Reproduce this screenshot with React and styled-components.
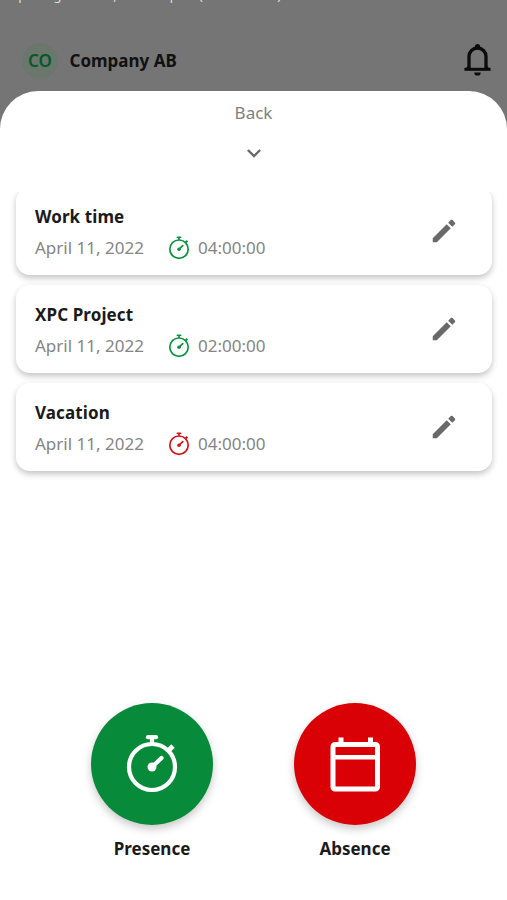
import React from 'react';
import styled, { createGlobalStyle } from 'styled-components';

const GlobalStyle = createGlobalStyle`
  * {
    box-sizing: border-box;
  }
  body {
    margin: 0;
    background: #757575;
    font-family: "Noto Sans", "Open Sans", sans-serif;
    color: #1a1a1a;
  }
`

const Screen = styled.div`
  display: flex;
  flex-direction: column;
  height: 900px;
  overflow: hidden;
  background: #757575;
`

const Caption = styled.div`
  display: flex;
  align-items: flex-end;
  height: 3px;
  padding-left: 8px;
  overflow: hidden;
  color: #dedede;
  font-size: 13px;
  letter-spacing: 0.1px;
  line-height: 16px;
  white-space: nowrap;
`

const Header = styled.header`
  display: flex;
  align-items: center;
  height: 88px;
  padding: 27px 16px 0 22px;
`

const Avatar = styled.div`
  width: 36px;
  height: 36px;
  border-radius: 50%;
  background: #6b766d;
  color: #05592a;
  font-size: 17px;
  font-weight: 650;
  line-height: 36px;
  text-align: center;
`

const Company = styled.div`
  flex: 1;
  margin-left: 11.5px;
  color: #111;
  font-size: 17px;
  font-weight: 700;
`

const Sheet = styled.main`
  display: flex;
  flex: 1;
  flex-direction: column;
  border-radius: 38px 38px 0 0;
  background: #fff;
`

const BackButton = styled.button`
  display: flex;
  flex-direction: column;
  align-items: center;
  gap: 24px;
  height: 101px;
  padding: 10px 0 0;
  border: 0;
  background: none;
  color: #808080;
  font: inherit;
  font-size: 17px;
  line-height: 24px;
`

const CardList = styled.div`
  display: flex;
  flex-direction: column;
  gap: 10px;
  height: 300px;
  padding: 0 15px 0 16px;
  overflow: hidden;
`

const Card = styled.article`
  display: flex;
  align-items: center;
  justify-content: space-between;
  flex: none;
  height: 88px;
  padding: 2px 33px 0 19px;
  border-radius: 14px;
  background: #fff;
  box-shadow: 0 3px 6px rgba(0, 0, 0, 0.24);

  &:first-child {
    margin-top: -5px;
  }
`

const CardTitle = styled.div`
  padding-top: 1px;
  font-size: 17px;
  font-weight: 700;
  letter-spacing: 0.1px;
  line-height: 24px;
`

const CardMeta = styled.div`
  display: flex;
  align-items: center;
  height: 24px;
  margin-top: 7px;
  color: #858585;
  font-size: 17px;
  line-height: 24px;
`

const CardDate = styled.span`
  width: 133px;
`

const CardTime = styled.span`
  margin-left: 8px;
`

const Actions = styled.div`
  display: flex;
  justify-content: center;
  gap: 81px;
  margin-top: auto;
  padding-bottom: 39px;
`

const Action = styled.div`
  display: flex;
  flex-direction: column;
  align-items: center;
  width: 122px;
  font-size: 17px;
  font-weight: 700;
  line-height: 24px;
`

const RoundButton = styled.button`
  display: flex;
  align-items: center;
  justify-content: center;
  width: 122px;
  height: 122px;
  margin-bottom: 12px;
  padding: 0;
  border: 0;
  border-radius: 50%;
  background: ${props => props.$color};
  color: #fff;
  box-shadow: 0 4px 8px rgba(0, 0, 0, 0.22);
`

const Stopwatch = ({ width, height, color = 'currentColor' }) => (
  <svg width={width} height={height} viewBox="0 0 54 60" fill="none" stroke={color} strokeWidth="4.2">
    <circle cx="27" cy="33" r="23" />
    <path d="M23 3.2h8" strokeLinecap="round" />
    <path d="M27 3v7" />
    <path d="M43 17l5-5" strokeWidth="4.8" />
    <path d="M27 33l9.5-9" strokeLinecap="round" />
    <circle cx="27" cy="33" r="4.5" fill={color} stroke="none" />
  </svg>
)

const Calendar = () => (
  <svg width="50" height="55" viewBox="0 0 50 55" fill="none" stroke="currentColor" strokeWidth="5">
    <rect x="3" y="7.5" width="44.5" height="44.5" rx="2" />
    <path d="M11 0.5v6M40.5 0.5v6" />
    <path d="M3 20.3h44" strokeWidth="4.6" />
  </svg>
)

const Bell = () => (
  <svg width="27" height="33" viewBox="0 0 27 33" fill="none" stroke="#0b0b0b" strokeWidth="3.3">
    <path d="M5 25V12.5a8.5 8.5 0 0 1 17 0v12.5" />
    <path d="M0.4 25.3h26.2" strokeWidth="3" />
    <path d="M1 25l4-4v4zM26 25l-4-4v4z" fill="#0b0b0b" stroke="none" />
    <circle cx="13.5" cy="2.6" r="2.6" fill="#0b0b0b" stroke="none" />
    <path d="M10.3 28.4h6.4a3.2 3.2 0 0 1-6.4 0z" fill="#0b0b0b" stroke="none" />
  </svg>
)

const Chevron = () => (
  <svg width="14" height="9" viewBox="0 0 14 9" fill="none" stroke="#696969" strokeWidth="2.4">
    <path d="M0.9 1l6.1 6.1L13.1 1" />
  </svg>
)

const PencilIcon = styled.svg`
  margin-bottom: 2px;
`

const Pencil = () => (
  <PencilIcon width="30" height="30" viewBox="0 0 24 24" fill="#696969">
    <path d="M3 17.75V21h3.25L17.4 9.85l-3.25-3.25L3 17.75zM20.71 6.54a1 1 0 0 0 0-1.41l-1.84-1.84a1 1 0 0 0-1.41 0l-2.1 2.1 3.25 3.25 2.1-2.1z" />
  </PencilIcon>
)

const entries = [
  { title: 'Work time', time: '04:00:00', color: '#0b943f' },
  { title: 'XPC Project', time: '02:00:00', color: '#0b943f' },
  { title: 'Vacation', time: '04:00:00', color: '#d51317' },
]

const App = () => (
  <Screen>
    <GlobalStyle />
    <Caption>Opening buttons, bottom part (variant 1/00)</Caption>
    <Header>
      <Avatar>CO</Avatar>
      <Company>Company AB</Company>
      <Bell />
    </Header>
    <Sheet>
      <BackButton>
        Back
        <Chevron />
      </BackButton>
      <CardList>
        {entries.map(entry => (
          <Card key={entry.title}>
            <div>
              <CardTitle>{entry.title}</CardTitle>
              <CardMeta>
                <CardDate>April 11, 2022</CardDate>
                <Stopwatch width={22} height={24} color={entry.color} />
                <CardTime>{entry.time}</CardTime>
              </CardMeta>
            </div>
            <Pencil />
          </Card>
        ))}
      </CardList>
      <Actions>
        <Action>
          <RoundButton $color="#078a3a">
            <Stopwatch width={54} height={60} />
          </RoundButton>
          Presence
        </Action>
        <Action>
          <RoundButton $color="#d90006">
            <Calendar />
          </RoundButton>
          Absence
        </Action>
      </Actions>
    </Sheet>
  </Screen>
)

export default App;
